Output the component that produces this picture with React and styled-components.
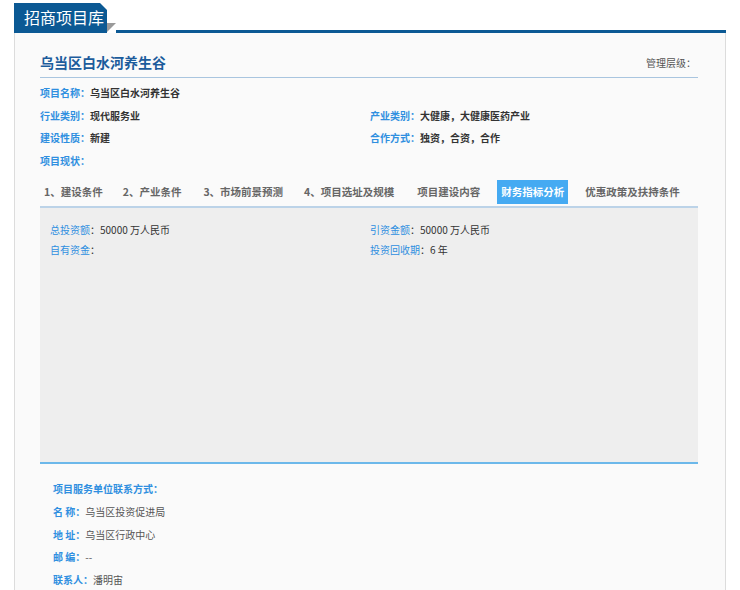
import React from 'react';
import styled, { createGlobalStyle } from 'styled-components';

const Global = createGlobalStyle`
  body {
    margin: 0;
    background: #fff;
    font-family: "Noto Sans CJK SC", "Noto Sans", sans-serif;
  }
`;

const Page = styled.div`
  width: 712px;
  margin-left: 14px;
`;

const Header = styled.div`
  display: flex;
  align-items: flex-end;
  height: 33px;
`;

const HeadTab = styled.div`
  width: 93px;
  height: 30px;
  background: #0b5994;
  color: #fff;
  font-size: 16px;
  line-height: 29px;
  padding-left: 10px;
  box-sizing: border-box;
  clip-path: polygon(0 0, 86px 0, 93px 7px, 93px 100%, 0 100%);
`;

const Fold = styled.svg`
  width: 9px;
  height: 9px;
  margin-bottom: 1px;
  flex: none;
`;

const HeadLine = styled.div`
  flex: 1;
  height: 3px;
  background: #0b5994;
`;

const Panel = styled.div`
  background: #fafafa;
  border-left: 1px solid #dcdcdc;
  border-right: 1px solid #dcdcdc;
  padding: 0 27px 0 25px;
  min-height: 560px;
`;

const TitleRow = styled.div`
  display: flex;
  justify-content: space-between;
  align-items: center;
  padding-top: 14px;
  height: 30px;
  border-bottom: 1px solid #a9c5df;
`;

const Title = styled.h1`
  margin: 0;
  font-size: 14px;
  font-weight: bold;
  color: #1c5c9c;
`;

const Level = styled.span`
  font-size: 10px;
  color: #555;
  padding-right: 2px;
`;

const Fields = styled.div`
  padding-top: 4px;
  display: grid;
  grid-template-columns: 330px 1fr;
`;

const Field = styled.div`
  grid-column: ${p => (p.$full ? '1 / span 2' : 'auto')};
  height: ${p => p.$h || '22.6px'};
  line-height: ${p => p.$h || '22.6px'};
  font-size: 10px;
  font-weight: ${p => (p.$light ? 'normal' : 'bold')};
  color: #333;
  white-space: nowrap;
`;

const Label = styled.span`
  color: #2f8fe0;
  font-weight: ${p => (p.$bold ? 'bold' : 'inherit')};
`;

const Value = styled.span`
  color: #555;
  font-weight: normal;
`;

const Tabs = styled.div`
  display: flex;
  margin-top: 8px;
  border-bottom: 2px solid #bcd3e8;
  padding-bottom: 2px;
`;

const Tab = styled.div`
  height: 24px;
  line-height: 24px;
  padding: 0 4px;
  margin-right: ${p => p.$mr}px;
  font-size: 10.5px;
  font-weight: bold;
  color: ${p => (p.$active ? '#fff' : '#666')};
  background: ${p => (p.$active ? '#45aaf2' : 'transparent')};
  white-space: nowrap;
`;

const Box = styled.div`
  box-sizing: border-box;
  background: #eeeeee;
  height: 256px;
  border-bottom: 2px solid #6cb8ea;
  padding: 12px 10px 0;
  display: grid;
  grid-template-columns: 320px 1fr;
  align-content: start;
`;

const Contact = styled.div`
  padding: 14px 0 0 13px;
`;

const topFields = [
  { label: '项目名称', value: '乌当区白水河养生谷', full: true },
  { label: '行业类别', value: '现代服务业' },
  { label: '产业类别', value: '大健康，大健康医药产业' },
  { label: '建设性质', value: '新建' },
  { label: '合作方式', value: '独资，合资，合作' },
  { label: '项目现状', value: '', full: true },
];

const tabs = [
  { name: '1、建设条件', mr: 12 },
  { name: '2、产业条件', mr: 14 },
  { name: '3、市场前景预测', mr: 13 },
  { name: '4、项目选址及规模', mr: 15 },
  { name: '项目建设内容', mr: 13 },
  { name: '财务指标分析', mr: 13, active: true },
  { name: '优惠政策及扶持条件', mr: 0 },
];

const finance = [
  { label: '总投资额', value: '50000 万人民币' },
  { label: '引资金额', value: '50000 万人民币' },
  { label: '自有资金', value: '' },
  { label: '投资回收期', value: '6 年' },
];

const contacts = [
  { label: '名 称', value: '乌当区投资促进局' },
  { label: '地 址', value: '乌当区行政中心' },
  { label: '邮 编', value: '--' },
  { label: '联系人', value: '潘明宙' },
];

const App = () => (
  <>
    <Global />
    <Page>
      <Header>
        <HeadTab>招商项目库</HeadTab>
        <Fold viewBox="0 0 9 9">
          <polygon points="0,0 9,0 0,9" fill="#9a9a9a" />
        </Fold>
        <HeadLine />
      </Header>
      <Panel>
        <TitleRow>
          <Title>乌当区白水河养生谷</Title>
          <Level>管理层级：</Level>
        </TitleRow>
        <Fields>
          {topFields.map(f => (
            <Field key={f.label} $full={f.full}>
              <Label>{f.label}：</Label>
              {f.value}
            </Field>
          ))}
        </Fields>
        <Tabs>
          {tabs.map(t => (
            <Tab key={t.name} $active={t.active} $mr={t.mr}>
              {t.name}
            </Tab>
          ))}
        </Tabs>
        <Box>
          {finance.map(f => (
            <Field key={f.label} $light $h="20px">
              <Label>{f.label}</Label>：{f.value}
            </Field>
          ))}
        </Box>
        <Contact>
          <Field>
            <Label>项目服务单位联系方式：</Label>
          </Field>
          {contacts.map(c => (
            <Field key={c.label}>
              <Label>{c.label}：</Label>
              <Value>{c.value}</Value>
            </Field>
          ))}
        </Contact>
      </Panel>
    </Page>
  </>
);

export default App;
